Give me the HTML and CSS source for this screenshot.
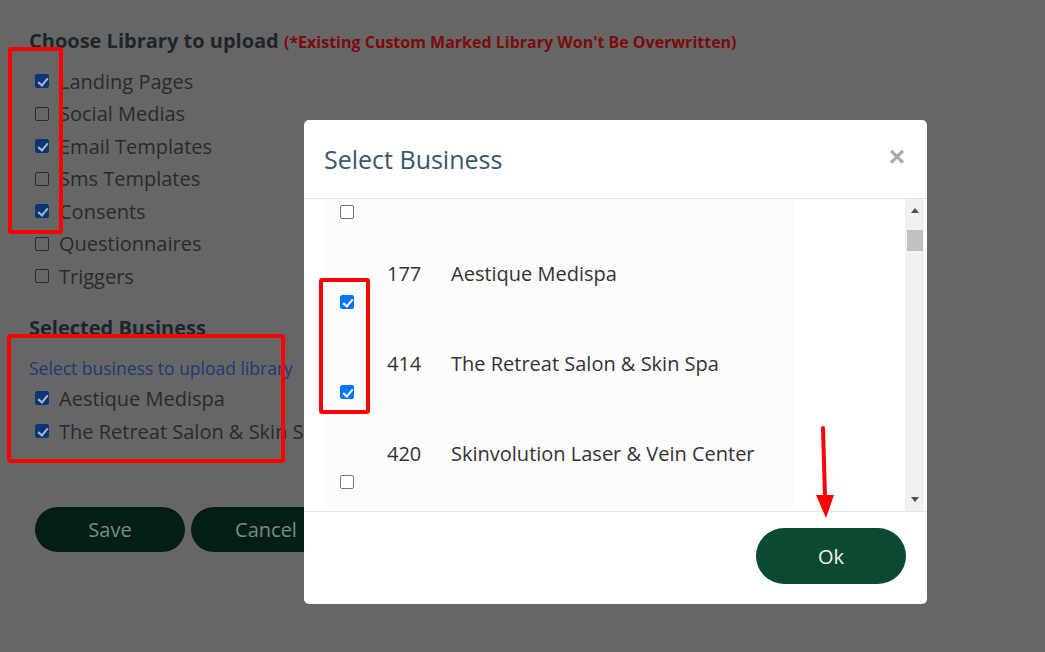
FILE: index.html
```html
<!DOCTYPE html>
<html lang="en">
<head>
<meta charset="utf-8">
<title>Choose Library to upload</title>
<link rel="stylesheet" href="styles.css">
</head>
<body>
<div class="page">
  <h2 class="lib-title">Choose Library to upload <span class="warn">(*Existing Custom Marked Library Won't Be Overwritten)</span></h2>
  <ul class="opts">
    <li><input type="checkbox" class="cb dim" checked><span>Landing Pages</span></li>
    <li><input type="checkbox" class="cb dim"><span>Social Medias</span></li>
    <li><input type="checkbox" class="cb dim" checked><span>Email Templates</span></li>
    <li><input type="checkbox" class="cb dim"><span>Sms Templates</span></li>
    <li><input type="checkbox" class="cb dim" checked><span>Consents</span></li>
    <li><input type="checkbox" class="cb dim"><span>Questionnaires</span></li>
    <li><input type="checkbox" class="cb dim"><span>Triggers</span></li>
  </ul>
  <h3 class="sel-title">Selected Business</h3>
  <p class="hint">Select business to upload library</p>
  <ul class="opts biz">
    <li><input type="checkbox" class="cb dim" checked><span>Aestique Medispa</span></li>
    <li><input type="checkbox" class="cb dim" checked><span>The Retreat Salon &amp; Skin Spa</span></li>
  </ul>
  <div class="actions">
    <button class="btn-dark">Save</button>
    <button class="btn-dark">Cancel</button>
  </div>
</div>

<div class="modal">
  <div class="modal-header">
    <span class="modal-title">Select Business</span>
    <span class="close">&times;</span>
  </div>
  <div class="modal-body">
    <div class="table-view">
      <div class="rows">
        <div class="row"><div class="c-check"><input type="checkbox" class="cb"></div><div class="c-num"></div><div class="c-name"></div></div>
        <div class="row"><div class="c-check"><input type="checkbox" class="cb" checked></div><div class="c-num">177</div><div class="c-name">Aestique Medispa</div></div>
        <div class="row"><div class="c-check"><input type="checkbox" class="cb" checked></div><div class="c-num">414</div><div class="c-name">The Retreat Salon &amp; Skin Spa</div></div>
        <div class="row"><div class="c-check"><input type="checkbox" class="cb"></div><div class="c-num">420</div><div class="c-name">Skinvolution Laser &amp; Vein Center</div></div>
      </div>
    </div>
    <div class="spacer"></div>
    <div class="scrollbar">
      <span class="arrow up"></span>
      <span class="thumb"></span>
      <span class="track-fill"></span>
      <span class="arrow down"></span>
    </div>
  </div>
  <div class="modal-footer">
    <button class="btn-ok">Ok</button>
  </div>
</div>

<div class="anno box1"></div>
<div class="anno box2"></div>
<div class="anno box3"></div>
<svg class="anno-arrow" width="30" height="100" viewBox="0 0 30 100">
  <line x1="13" y1="3" x2="15" y2="72" stroke="#ff0000" stroke-width="4" stroke-linecap="round"/>
  <polygon points="6,70 24,70 16,93" fill="#ff0000"/>
</svg>
</body>
</html>
```

FILE: styles.css
```css
* { box-sizing: border-box; }

html, body {
  margin: 0;
  padding: 0;
}

body {
  background: #666666;
  font-family: "Open Sans", "Liberation Sans", sans-serif;
  width: 1045px;
  height: 652px;
  overflow: hidden;
  position: relative;
}

.page {
  padding: 29px 0 0 29px;
}

.lib-title {
  margin: 0;
  font-size: 20px;
  line-height: 24px;
  height: 24px;
  font-weight: 700;
  color: #1d262d;
}

.warn {
  font-size: 16px;
  line-height: 24px;
  color: #7e0b0b;
}

.opts {
  list-style: none;
  margin: 12px 0 0 0;
  padding: 0;
}

.opts li {
  height: 32.5px;
  display: flex;
  align-items: center;
  gap: 10px;
  padding-left: 6px;
  font-size: 20px;
  color: #262c31;
}

.biz {
  margin-top: 3px;
}

.biz li {
  height: 33px;
}

.sel-title {
  margin: 23px 0 0 0;
  font-size: 20px;
  line-height: 24px;
  font-weight: 700;
  color: #1d262d;
}

.hint {
  margin: 17px 0 0 0;
  font-size: 17.5px;
  line-height: 22px;
  color: #1c3a76;
}

.actions {
  margin-top: 59px;
  padding-left: 6px;
  display: flex;
  gap: 6px;
}

.btn-dark {
  width: 150px;
  height: 45px;
  border: none;
  border-radius: 23px;
  background: #031f15;
  color: #7b8985;
  font-family: "Open Sans", "Liberation Sans", sans-serif;
  font-size: 20px;
}

/* checkboxes */
.cb {
  appearance: none;
  -webkit-appearance: none;
  width: 14px;
  height: 14px;
  margin: 0;
  border: 1px solid #767676;
  border-radius: 2px;
  background: #ffffff;
  position: relative;
  flex: none;
  display: block;
}

.cb:checked {
  background: #0075ff;
  border-color: #0075ff;
}

.cb:checked::after {
  content: "";
  position: absolute;
  left: 3.5px;
  top: 0.5px;
  width: 4px;
  height: 8px;
  border-right: 2.5px solid #ffffff;
  border-bottom: 2.5px solid #ffffff;
  transform: rotate(40deg);
}

.cb.dim {
  background: transparent;
  border-color: #2a2a2a;
}

.cb.dim:checked {
  background: #0c3576;
  border-color: #0c3576;
}

.cb.dim:checked::after {
  border-color: #a9b6cc;
}

/* modal */
.modal {
  position: absolute;
  left: 304px;
  top: 120px;
  width: 623px;
  height: 484px;
  background: #ffffff;
  border-radius: 5px;
  display: flex;
  flex-direction: column;
  overflow: hidden;
}

.modal-header {
  height: 79px;
  flex: none;
  display: flex;
  align-items: center;
  justify-content: space-between;
  padding: 0 22px 0 20px;
  border-bottom: 1px solid #e5e5e5;
}

.modal-title {
  font-size: 25px;
  color: #37576a;
}

.close {
  font-family: "Liberation Sans", "Open Sans", sans-serif;
  font-size: 28px;
  font-weight: 700;
  color: #a9a9a9;
  line-height: 1;
  margin-top: -4px;
}

.modal-body {
  height: 312px;
  flex: none;
  display: flex;
  padding-left: 20px;
}

.table-view {
  width: 470px;
  height: 312px;
  overflow: hidden;
  background: #fcfcfc;
}

.rows {
  margin-top: -60px;
}

.row {
  height: 90px;
  display: grid;
  grid-template-columns: 63px 64px 1fr;
  font-size: 20px;
  color: #333333;
}

.c-check {
  align-self: end;
  padding: 0 0 10px 16px;
}

.c-num,
.c-name {
  align-self: center;
  line-height: 30px;
}

.spacer {
  width: 111px;
  flex: none;
}

.scrollbar {
  width: 19px;
  flex: none;
  background: #f1f1f1;
  display: flex;
  flex-direction: column;
  align-items: center;
}

.arrow {
  width: 0;
  height: 0;
  border-left: 4.5px solid transparent;
  border-right: 4.5px solid transparent;
  flex: none;
}

.arrow.up {
  border-bottom: 5px solid #505050;
  margin-top: 9px;
}

.arrow.down {
  border-top: 5px solid #505050;
  margin-bottom: 9px;
}

.thumb {
  width: 16px;
  height: 21px;
  background: #c1c1c1;
  margin-top: 17px;
  flex: none;
}

.track-fill {
  flex: 1;
}

.modal-footer {
  flex: 1;
  border-top: 1px solid #e5e5e5;
  display: flex;
  justify-content: flex-end;
  padding: 16px 21px 20px 0;
}

.btn-ok {
  width: 150px;
  height: 56px;
  border: none;
  border-radius: 28px;
  background: #0a4a30;
  color: #f2f2f2;
  font-family: "Open Sans", "Liberation Sans", sans-serif;
  font-size: 20px;
}

/* annotations */
.anno {
  position: absolute;
  border: 4px solid #ff0000;
  border-radius: 3px;
}

.box1 { left: 8px; top: 47px; width: 55px; height: 187px; }
.box2 { left: 7px; top: 334px; width: 278px; height: 129px; }
.box3 { left: 319px; top: 278px; width: 51px; height: 136px; }

.anno-arrow {
  position: absolute;
  left: 810px;
  top: 425px;
}
```
